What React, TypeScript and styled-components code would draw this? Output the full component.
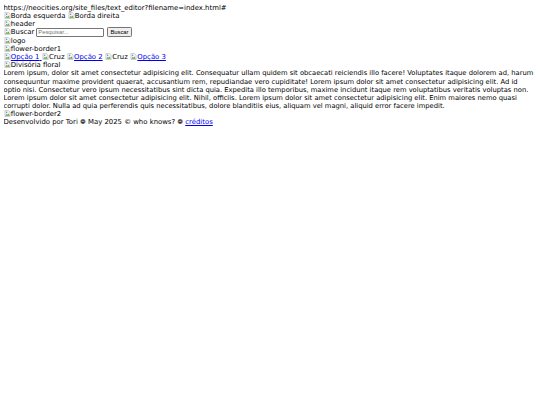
import React from "react";
import styled, { createGlobalStyle } from "styled-components";

const Global = createGlobalStyle`
  html, body { background: #ffffff; }
  body {
    margin: 3.5px;
    font-family: "DejaVu Sans", Verdana, sans-serif;
    font-size: 6.9px;
    line-height: 8.1px;
    color: #000;
  }
`;

const Line = styled.div`
  display: block;
  height: 8.1px;
`;

const Paragraph = styled.div`
  display: block;
  font-size: 6.75px;
  line-height: 8.1px;
`;

const Link = styled.a`
  color: #0000ee;
  text-decoration: underline;
`;

const Broken = styled.span`
  display: inline;
  white-space: nowrap;
`;

const IconSvg = styled.svg`
  width: 7px;
  height: 7px;
  vertical-align: -1px;
  margin-right: 0.3px;
`;

const SearchRow = styled.div`
  display: flex;
  align-items: center;
  height: 9.3px;
`;

const Label = styled.span`
  white-space: nowrap;
`;

const Input = styled.input`
  font-family: Arial, "Liberation Sans", sans-serif;
  font-size: 5.8px;
  width: 64px;
  height: 7.5px;
  padding: 0 1px;
  margin: 0 0 0 2px;
  border: 0.5px solid #767676;
  border-radius: 1px;
  box-sizing: content-box;
  &::placeholder { color: #757575; }
`;

const Button = styled.button`
  font-family: Arial, "Liberation Sans", sans-serif;
  font-size: 5.8px;
  padding: 0.5px 2.6px;
  margin: 0 0 0 2.5px;
  background: #efefef;
  border: 0.5px solid #767676;
  border-radius: 1.3px;
  color: #000;
  line-height: 7px;
`;

const Icon = () => (
  <IconSvg viewBox="0 0 16 16">
    <path d="M2 1h8l4 4v10H2z" fill="#f4f4f4" stroke="#9a9a9a" strokeWidth="1" />
    <path d="M3 13l3-4 2 2 2-3 3 5z" fill="#57a64a" />
    <circle cx="6" cy="5" r="1.6" fill="#4a8ad6" />
  </IconSvg>
);

const Img = ({ alt }: { alt: string }) => (
  <Broken>
    <Icon />
    {alt}
  </Broken>
);

export default function App() {
  return (
    <>
      <Global />
      <Line>https://neocities.org/site_files/text_editor?filename=index.html#</Line>
      <Line>
        <Img alt="Borda esquerda" /> <Img alt="Borda direita" />
      </Line>
      <Line>
        <Img alt="header" />
      </Line>
      <SearchRow>
        <Label>
          <Img alt="Buscar" />
        </Label>
        <Input placeholder="Pesquisar..." />
        <Button>Buscar</Button>
      </SearchRow>
      <Line>
        <Img alt="logo" />
      </Line>
      <Line>
        <Img alt="flower-border1" />
      </Line>
      <Line>
        <Link href="#">
          <Img alt="Opção 1" />{" "}
        </Link>
        <Img alt="Cruz" />{" "}
        <Link href="#">
          <Img alt="Opção 2" />
        </Link>{" "}
        <Img alt="Cruz" />{" "}
        <Link href="#">
          <Img alt="Opção 3" />
        </Link>
      </Line>
      <Line>
        <Img alt="Divisória floral" />
      </Line>
      <Paragraph>
        Lorem ipsum, dolor sit amet consectetur adipisicing elit. Consequatur ullam quidem sit obcaecati reiciendis illo facere! Voluptates itaque dolorem ad, harum consequuntur maxime provident quaerat, accusantium rem, repudiandae vero cupiditate! Lorem ipsum dolor sit amet consectetur adipisicing elit. Ad id optio nisi. Consectetur vero ipsum necessitatibus sint dicta quia. Expedita illo temporibus, maxime incidunt itaque rem voluptatibus veritatis voluptas non. Lorem ipsum dolor sit amet consectetur adipisicing elit. Nihil, officiis. Lorem ipsum dolor sit amet consectetur adipisicing elit. Enim maiores nemo quasi corrupti dolor. Nulla ad quia perferendis quis necessitatibus, dolore blanditiis eius, aliquam vel magni, aliquid error facere impedit.
      </Paragraph>
      <Line>
        <Img alt="flower-border2" />
      </Line>
      <Line>
        Desenvolvido por Tori ❁ May 2025 © who knows? ❁ <Link href="#">créditos</Link>
      </Line>
    </>
  );
}
